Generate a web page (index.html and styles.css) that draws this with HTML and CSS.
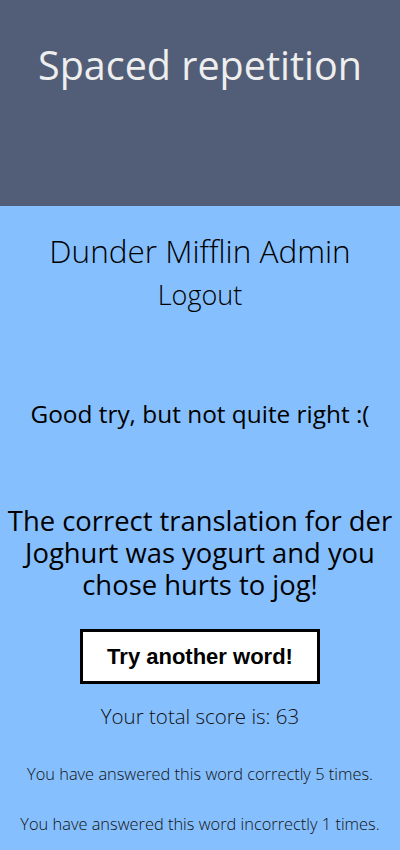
FILE: index.html
```html
<!DOCTYPE html>
<html lang="en">
<head>
<meta charset="utf-8">
<title>Spaced repetition</title>
<link rel="stylesheet" href="styles.css">
</head>
<body>
<header class="top">
  <h1 class="title">Spaced repetition</h1>
</header>
<main class="content">
  <div class="user">
    <p class="user-name">Dunder Mifflin Admin</p>
    <a class="logout" href="#">Logout</a>
  </div>
  <section class="feedback">
    <h2 class="verdict">Good try, but not quite right :(</h2>
    <p class="answer">The correct translation for der Joghurt was yogurt and you chose hurts to jog!</p>
    <button class="next" type="button">Try another word!</button>
    <p class="score">Your total score is: 63</p>
    <p class="count">You have answered this word correctly 5 times.</p>
    <p class="count">You have answered this word incorrectly 1 times.</p>
  </section>
</main>
</body>
</html>
```
FILE: styles.css
```css
html, body {
  margin: 0;
  padding: 0;
}
body {
  background: #86bffd;
  font-family: "Open Sans", "Noto Sans", sans-serif;
  color: #000;
  text-align: center;
}
.top {
  background: #525e77;
  height: 206px;
  box-sizing: border-box;
  padding-top: 37px;
}
.title {
  margin: 0;
  font-size: 39.5px;
  font-weight: 400;
  color: #eeeeee;
  line-height: 56px;
}
.content {
  display: flex;
  flex-direction: column;
  align-items: center;
}
.user {
  display: flex;
  flex-direction: column;
  align-items: center;
  padding-top: 24px;
}
.user-name {
  margin: 0;
  font-size: 31.5px;
  font-weight: 300;
  line-height: 42px;
}
.logout {
  margin-top: 4px;
  font-size: 27px;
  font-weight: 300;
  color: #000;
  text-decoration: none;
  line-height: 38px;
}
.feedback {
  display: flex;
  flex-direction: column;
  align-items: center;
  padding-top: 84px;
}
.verdict {
  margin: 0;
  font-size: 24.4px;
  font-weight: 400;
  line-height: 32px;
}
.answer {
  margin: 75px 0 0;
  font-size: 27.4px;
  line-height: 32px;
  padding: 0 4px;
}
.next {
  margin-top: 28px;
  width: 240px;
  height: 55px;
  background: #fff;
  border: 3px solid #000;
  font-family: "Liberation Sans", Arial, sans-serif;
  font-weight: 700;
  font-size: 22px;
  color: #000;
  padding: 0;
}
.score {
  margin: 18px 0 0;
  font-size: 20.5px;
  font-weight: 300;
  line-height: 28px;
  color: #111;
}
.count {
  margin: 33px 0 0;
  font-size: 16.4px;
  font-weight: 300;
  line-height: 22px;
  color: #111;
}
.count + .count {
  margin-top: 28px;
}
```
